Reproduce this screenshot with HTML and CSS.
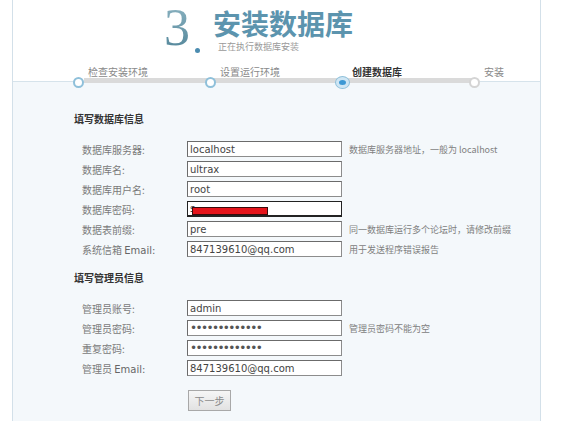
FILE: index.html
```html
<!DOCTYPE html>
<html lang="zh-CN">
<head>
  <meta charset="UTF-8" />
  <title>安装数据库</title>
  <link rel="stylesheet" href="styles.css">
</head>
<body>
  <div class="panel">
    <div class="head">
      <div class="num">3<span class="dot"></span></div>
      <div class="title">
        <h1>安装数据库</h1>
        <p>正在执行数据库安装</p>
      </div>
    </div>

    <ul class="steps">
      <li class="done"><span class="circle"></span><span class="label">检查安装环境</span></li>
      <li class="done"><span class="circle"></span><span class="label">设置运行环境</span></li>
      <li class="current"><span class="circle"></span><span class="label">创建数据库</span></li>
      <li><span class="circle"></span><span class="label">安装</span></li>
    </ul>

    <form class="form" onsubmit="return false">
      <h2>填写数据库信息</h2>
      <div class="fields">
        <label>数据库服务器:</label>
        <input type="text" value="localhost" />
        <span class="hint">数据库服务器地址，一般为 localhost</span>

        <label>数据库名:</label>
        <input type="text" value="ultrax" />
        <span class="hint"></span>

        <label>数据库用户名:</label>
        <input type="text" value="root" />
        <span class="hint"></span>

        <label>数据库密码:</label>
        <span class="masked">
          <input type="text" class="focus" value="s" />
          <span class="redact"></span>
        </span>
        <span class="hint"></span>

        <label>数据表前缀:</label>
        <input type="text" value="pre_" />
        <span class="hint">同一数据库运行多个论坛时，请修改前缀</span>

        <label>系统信箱 <b>Email:</b></label>
        <input type="text" value="847139610@qq.com" />
        <span class="hint">用于发送程序错误报告</span>
      </div>

      <h2 class="second">填写管理员信息</h2>
      <div class="fields">
        <label>管理员账号:</label>
        <input type="text" value="admin" />
        <span class="hint"></span>

        <label>管理员密码:</label>
        <input type="password" value="1234567890123" />
        <span class="hint">管理员密码不能为空</span>

        <label>重复密码:</label>
        <input type="password" value="1234567890123" />
        <span class="hint"></span>

        <label>管理员 <b>Email:</b></label>
        <input type="text" value="847139610@qq.com" />
        <span class="hint"></span>
      </div>

      <button type="submit" class="next">下一步</button>
    </form>
  </div>
</body>
</html>
```

FILE: styles.css
```css
body {
  margin: 0;
  background: #ffffff;
  font-family: "DejaVu Sans", "Noto Sans CJK SC", sans-serif;
  font-size: 10px;
  color: #777;
}

.panel {
  margin-left: 12px;
  width: 527px;
  min-height: 421px;
  border-left: 1px solid #d3e0e9;
  border-right: 1px solid #d3e0e9;
  background: linear-gradient(to bottom, #ffffff 81px, #d6e3eb 81px, #d6e3eb 82px, #f4f8fb 82px);
}

/* header */
.head {
  display: flex;
  align-items: flex-start;
  height: 66px;
  padding-left: 151px;
  box-sizing: border-box;
  padding-top: 2px;
}

.num {
  display: flex;
  align-items: flex-end;
  font-family: "Liberation Serif", serif;
  font-size: 52px;
  line-height: 52px;
  color: #6d9fb1;
  background: linear-gradient(#8db4c2, #4f8397);
  -webkit-background-clip: text;
  background-clip: text;
  -webkit-text-fill-color: transparent;
}

.dot {
  width: 5px;
  height: 5px;
  border-radius: 50%;
  background: #4b8cb0;
  margin: 0 0 0 5px;
  position: relative;
  top: -1px;
}

.title {
  margin-left: 13px;
  margin-top: 7px;
}

.title h1 {
  margin: 0;
  font-family: "Noto Sans CJK SC", sans-serif;
  font-size: 28px;
  line-height: 28px;
  font-weight: 700;
  color: #5c94ae;
}

.title p {
  margin: 5px 0 0 5px;
  font-family: "Noto Sans CJK SC", sans-serif;
  font-size: 9px;
  line-height: 10px;
  color: #9a9a9a;
}

/* steps */
.steps {
  list-style: none;
  margin: 0;
  padding: 0 0 0 60px;
  display: flex;
  height: 22px;
  background: linear-gradient(#dadada, #dadada) no-repeat;
  background-position: 71px 12px;
  background-size: 390px 5px;
}

.steps li {
  flex: none;
  width: 132px;
  display: flex;
  flex-direction: column;
}

.steps li:last-child {
  width: 60px;
}

.steps .label {
  order: -1;
  margin-left: 15px;
  font-family: "Noto Sans CJK SC", sans-serif;
  font-size: 10px;
  line-height: 11px;
  color: #8a8a8a;
  white-space: nowrap;
}

.steps .circle {
  width: 7px;
  height: 7px;
  border: 2px solid #8fc0da;
  border-radius: 50%;
  background: #fff;
}

.steps .current .circle {
  background: #3d98d4;
  border: 3px solid #cfe6f4;
  box-shadow: 0 0 0 1px #8fc0da;
  margin-left: -1px;
}

.steps .current .label {
  color: #333;
  font-weight: 700;
}

.steps li:last-child .circle {
  border-color: #d4d4d4;
}

/* form */
.form {
  padding-left: 61px;
}

.form h2 {
  margin: 24px 0 0;
  font-family: "Noto Sans CJK SC", sans-serif;
  font-size: 10px;
  line-height: 14px;
  font-weight: 700;
  color: #333;
}

.form h2.second {
  margin-top: 14px;
}

.fields {
  display: grid;
  grid-template-columns: 98px 155px auto;
  grid-auto-rows: 16px;
  column-gap: 7px;
  row-gap: 4px;
  padding-left: 8px;
  margin-top: 15px;
  align-items: center;
}

.fields label {
  font-family: "Noto Sans CJK SC", sans-serif;
  font-size: 10px;
  color: #7a7a7a;
  white-space: nowrap;
}

.fields label b {
  font-family: "DejaVu Sans", sans-serif;
  font-weight: 400;
  color: #666;
}

.fields input {
  width: 155px;
  height: 16px;
  box-sizing: border-box;
  margin: 0;
  padding: 0 2px;
  border: 1px solid #8c8c8c;
  border-top-color: #6b6b6b;
  border-left-color: #6b6b6b;
  background: #fff;
  font-family: "DejaVu Sans", sans-serif;
  font-size: 10px;
  color: #444;
}

.fields input[type="password"] {
  font-size: 12px;
  letter-spacing: -1.6px;
  color: #555;
}

.fields input.focus {
  border: 1px solid #222;
  border-bottom-width: 2px;
}

.masked {
  position: relative;
  height: 16px;
}

.redact {
  position: absolute;
  left: 5px;
  top: 6px;
  width: 74px;
  height: 6px;
  background: #e4141b;
  border: 1px solid #3a0a0a;
}

.hint {
  font-family: "Noto Sans CJK SC", sans-serif;
  font-size: 9px;
  color: #808080;
  white-space: nowrap;
}

.next {
  margin: 14px 0 0 114px;
  width: 43px;
  height: 21px;
  padding: 0;
  border: 1px solid #a8a8a8;
  background: linear-gradient(#f6f6f6, #e2e2e2);
  font-family: "Noto Sans CJK SC", sans-serif;
  font-size: 10px;
  color: #8a8a8a;
  cursor: pointer;
}
```
